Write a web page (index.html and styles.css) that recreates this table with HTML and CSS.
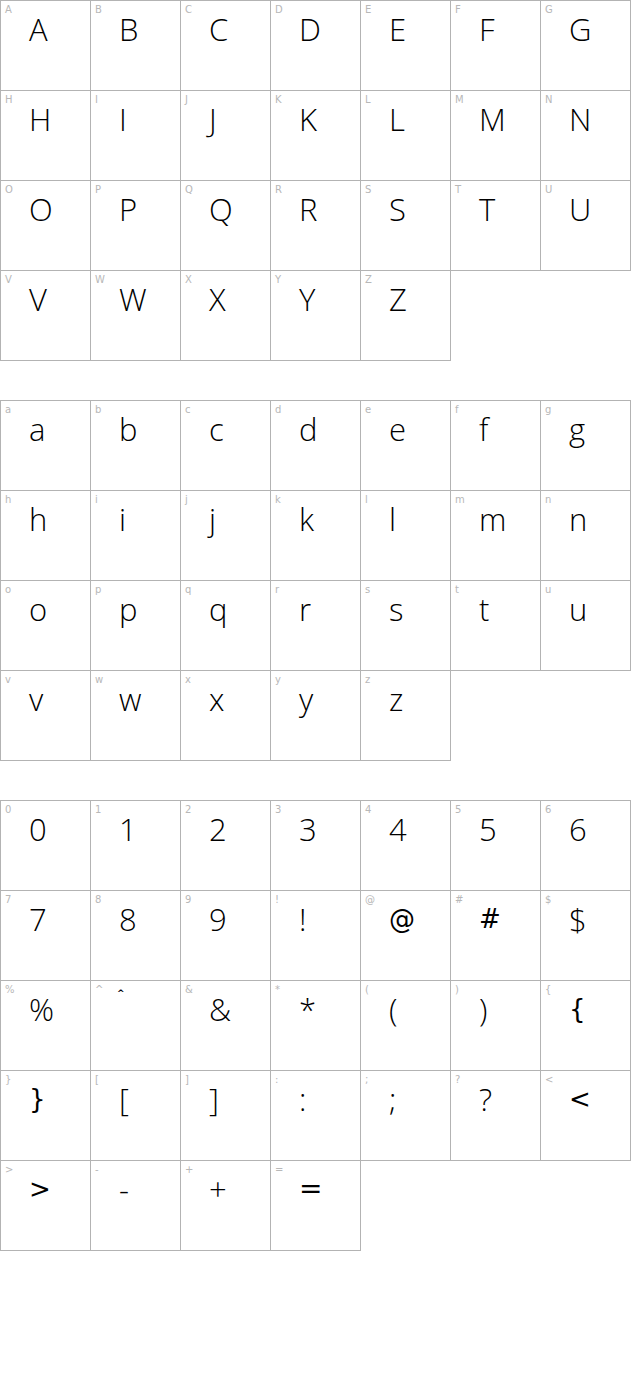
FILE: index.html
```html
<!DOCTYPE html>
<html>
<head>
<meta charset="utf-8">
<link rel="stylesheet" href="styles.css">
</head>
<body>
<div class="grid">
<div class="cell"><span class="lbl">A</span><span class="ch">A</span></div>
<div class="cell"><span class="lbl">B</span><span class="ch">B</span></div>
<div class="cell"><span class="lbl">C</span><span class="ch">C</span></div>
<div class="cell"><span class="lbl">D</span><span class="ch">D</span></div>
<div class="cell"><span class="lbl">E</span><span class="ch">E</span></div>
<div class="cell"><span class="lbl">F</span><span class="ch">F</span></div>
<div class="cell"><span class="lbl">G</span><span class="ch">G</span></div>
<div class="cell"><span class="lbl">H</span><span class="ch">H</span></div>
<div class="cell"><span class="lbl">I</span><span class="ch">I</span></div>
<div class="cell"><span class="lbl">J</span><span class="ch">J</span></div>
<div class="cell"><span class="lbl">K</span><span class="ch">K</span></div>
<div class="cell"><span class="lbl">L</span><span class="ch">L</span></div>
<div class="cell"><span class="lbl">M</span><span class="ch">M</span></div>
<div class="cell"><span class="lbl">N</span><span class="ch">N</span></div>
<div class="cell"><span class="lbl">O</span><span class="ch">O</span></div>
<div class="cell"><span class="lbl">P</span><span class="ch">P</span></div>
<div class="cell"><span class="lbl">Q</span><span class="ch">Q</span></div>
<div class="cell"><span class="lbl">R</span><span class="ch">R</span></div>
<div class="cell"><span class="lbl">S</span><span class="ch">S</span></div>
<div class="cell"><span class="lbl">T</span><span class="ch">T</span></div>
<div class="cell"><span class="lbl">U</span><span class="ch">U</span></div>
<div class="cell"><span class="lbl">V</span><span class="ch">V</span></div>
<div class="cell"><span class="lbl">W</span><span class="ch">W</span></div>
<div class="cell"><span class="lbl">X</span><span class="ch">X</span></div>
<div class="cell"><span class="lbl">Y</span><span class="ch">Y</span></div>
<div class="cell"><span class="lbl">Z</span><span class="ch">Z</span></div>
</div>

<div class="grid">
<div class="cell"><span class="lbl">a</span><span class="ch">a</span></div>
<div class="cell"><span class="lbl">b</span><span class="ch">b</span></div>
<div class="cell"><span class="lbl">c</span><span class="ch">c</span></div>
<div class="cell"><span class="lbl">d</span><span class="ch">d</span></div>
<div class="cell"><span class="lbl">e</span><span class="ch">e</span></div>
<div class="cell"><span class="lbl">f</span><span class="ch">f</span></div>
<div class="cell"><span class="lbl">g</span><span class="ch">g</span></div>
<div class="cell"><span class="lbl">h</span><span class="ch">h</span></div>
<div class="cell"><span class="lbl">i</span><span class="ch">i</span></div>
<div class="cell"><span class="lbl">j</span><span class="ch">j</span></div>
<div class="cell"><span class="lbl">k</span><span class="ch">k</span></div>
<div class="cell"><span class="lbl">l</span><span class="ch">l</span></div>
<div class="cell"><span class="lbl">m</span><span class="ch">m</span></div>
<div class="cell"><span class="lbl">n</span><span class="ch">n</span></div>
<div class="cell"><span class="lbl">o</span><span class="ch">o</span></div>
<div class="cell"><span class="lbl">p</span><span class="ch">p</span></div>
<div class="cell"><span class="lbl">q</span><span class="ch">q</span></div>
<div class="cell"><span class="lbl">r</span><span class="ch">r</span></div>
<div class="cell"><span class="lbl">s</span><span class="ch">s</span></div>
<div class="cell"><span class="lbl">t</span><span class="ch">t</span></div>
<div class="cell"><span class="lbl">u</span><span class="ch">u</span></div>
<div class="cell"><span class="lbl">v</span><span class="ch">v</span></div>
<div class="cell"><span class="lbl">w</span><span class="ch">w</span></div>
<div class="cell"><span class="lbl">x</span><span class="ch">x</span></div>
<div class="cell"><span class="lbl">y</span><span class="ch">y</span></div>
<div class="cell"><span class="lbl">z</span><span class="ch">z</span></div>
</div>

<div class="grid">
<div class="cell"><span class="lbl">0</span><span class="ch">0</span></div>
<div class="cell"><span class="lbl">1</span><span class="ch">1</span></div>
<div class="cell"><span class="lbl">2</span><span class="ch">2</span></div>
<div class="cell"><span class="lbl">3</span><span class="ch">3</span></div>
<div class="cell"><span class="lbl">4</span><span class="ch">4</span></div>
<div class="cell"><span class="lbl">5</span><span class="ch">5</span></div>
<div class="cell"><span class="lbl">6</span><span class="ch">6</span></div>
<div class="cell"><span class="lbl">7</span><span class="ch">7</span></div>
<div class="cell"><span class="lbl">8</span><span class="ch">8</span></div>
<div class="cell"><span class="lbl">9</span><span class="ch">9</span></div>
<div class="cell"><span class="lbl">!</span><span class="ch">!</span></div>
<div class="cell"><span class="lbl">@</span><span class="ch fb">@</span></div>
<div class="cell"><span class="lbl">#</span><span class="ch fb">#</span></div>
<div class="cell"><span class="lbl">$</span><span class="ch">$</span></div>
<div class="cell"><span class="lbl">%</span><span class="ch">%</span></div>
<div class="cell"><span class="lbl">^</span><span class="ch caret">^</span></div>
<div class="cell"><span class="lbl">&amp;</span><span class="ch">&amp;</span></div>
<div class="cell"><span class="lbl">*</span><span class="ch">*</span></div>
<div class="cell"><span class="lbl">(</span><span class="ch">(</span></div>
<div class="cell"><span class="lbl">)</span><span class="ch">)</span></div>
<div class="cell"><span class="lbl">{</span><span class="ch fb">{</span></div>
<div class="cell"><span class="lbl">}</span><span class="ch fb">}</span></div>
<div class="cell"><span class="lbl">[</span><span class="ch">[</span></div>
<div class="cell"><span class="lbl">]</span><span class="ch">]</span></div>
<div class="cell"><span class="lbl">:</span><span class="ch">:</span></div>
<div class="cell"><span class="lbl">;</span><span class="ch">;</span></div>
<div class="cell"><span class="lbl">?</span><span class="ch">?</span></div>
<div class="cell"><span class="lbl">&lt;</span><span class="ch fb">&lt;</span></div>
<div class="cell"><span class="lbl">&gt;</span><span class="ch fb">&gt;</span></div>
<div class="cell"><span class="lbl">-</span><span class="ch">-</span></div>
<div class="cell"><span class="lbl">+</span><span class="ch">+</span></div>
<div class="cell"><span class="lbl">=</span><span class="ch fb eq">=</span></div>
</div>
</body>
</html>
```

FILE: styles.css
```css
html, body {
  margin: 0;
  padding: 0;
  background: #fff;
}

.grid {
  display: grid;
  grid-template-columns: repeat(7, 90px);
  grid-auto-rows: 90px;
  margin-bottom: 40px;
}

.cell {
  width: 91px;
  height: 91px;
  box-sizing: border-box;
  border: 1px solid #b3b3b3;
  display: flex;
  flex-direction: column;
}

.lbl {
  display: block;
  height: 12px;
  padding: 3px 0 0 4px;
  font-family: "DejaVu Sans", sans-serif;
  font-size: 10px;
  line-height: 12px;
  color: #b8b8b8;
}

.ch {
  display: block;
  margin-top: 1px;
  padding-left: 28px;
  font-family: "Open Sans", sans-serif;
  font-weight: 300;
  font-size: 31px;
  line-height: 24px;
  color: #000;
}

.ch.fb {
  font-family: "DejaVu Sans", sans-serif;
  font-weight: 400;
  font-size: 26px;
}

.ch.eq {
  font-size: 28px;
}

.ch.caret {
  margin-top: -9px;
  padding-left: 26px;
  font-family: "DejaVu Sans", sans-serif;
  font-weight: 700;
  font-size: 9px;
  line-height: 12px;
}
```
